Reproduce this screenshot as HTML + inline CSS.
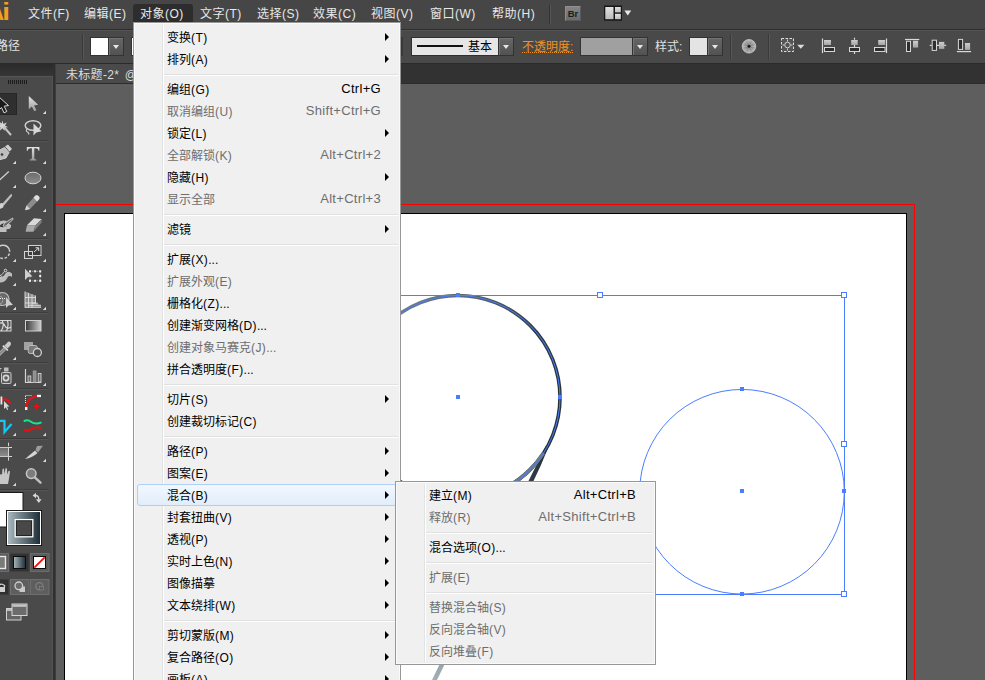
<!DOCTYPE html>
<html lang="zh-CN">
<head>
<meta charset="utf-8">
<title>Adobe Illustrator</title>
<style>
*{box-sizing:border-box;margin:0;padding:0}
html,body{width:985px;height:680px;overflow:hidden;background:#5e5e5e}
body{position:relative;font-family:"Liberation Sans","Noto Sans CJK SC",sans-serif;font-size:12px;color:#e6e6e6}
.abs{position:absolute}
#menubar{left:0;top:0;width:985px;height:29px;background:#464646}
#menubar .mi{position:absolute;top:0;height:29px;line-height:29px;white-space:nowrap;color:#e8e8e8;font-size:12px;letter-spacing:.5px;margin-left:-1px}
#mbline{left:0;top:29px;width:985px;height:1px;background:#2e2e2e}
#ctrl{left:0;top:30px;width:985px;height:33px;background:#494949;border-top:1px solid #535353}
#ctrlline{left:0;top:63px;width:985px;height:1px;background:#2a2a2a}
#tabbar{left:56px;top:64px;width:929px;height:20px;background:#323232}
#tab{left:56px;top:64px;width:120px;height:19px;background:#4a4a4a;color:#dcdcdc;line-height:23px;padding-left:10px;white-space:nowrap;font-size:12px;letter-spacing:.3px;word-spacing:2px}
#tabline{left:56px;top:83px;width:929px;height:1px;background:#2c2c2c}
#toolbox{left:0;top:64px;width:53px;height:616px;background:#4a4a4a}
#tbhead{left:0;top:64px;width:53px;height:12px;background:linear-gradient(#2b2b2b,#363636)}
#tbgap{left:53px;top:64px;width:3px;height:616px;background:#303030;border-right:1px solid #3e3e3e}
#canvas{left:56px;top:84px;width:929px;height:596px;background:#5e5e5e}
/* menu */
.menu{position:absolute;background:#f0f0f0;border:1px solid #979797;color:#000;font-size:12px;box-shadow:inset 1px 1px 0 #fafafa,inset -1px -1px 0 #fafafa}
.menu .gut{position:absolute;top:2px;bottom:2px;width:2px;border-left:1px solid #e2e3e3;border-right:1px solid #fff}
.menu .it{position:absolute;height:22px;line-height:25px;white-space:nowrap;margin-left:-1px}
.menu .dis{color:#6d6d6d}
.menu .l{font-size:12px;letter-spacing:.4px;line-height:0}
.menu .sc{position:absolute;height:22px;line-height:21px;white-space:nowrap;text-align:right;font-size:13px;letter-spacing:.3px;margin-right:-1px}
.menu .sep{position:absolute;height:2px;border-top:1px solid #e0e0e0;border-bottom:1px solid #fff}
.menu .arr{position:absolute;width:0;height:0;border-left:4px solid #000;border-top:4px solid transparent;border-bottom:4px solid transparent}
.menu .hl{position:absolute;border:1px solid #aecff7;border-radius:3px;background:linear-gradient(#f2f7fd,#e1edfb)}
.dd{background:linear-gradient(#666,#525252);border:1px solid #333;box-shadow:inset 1px 1px 0 #747474}
.dd:after{content:"";position:absolute;left:4px;top:7px;border-top:4px solid #e6e6e6;border-left:3.500px solid transparent;border-right:3.500px solid transparent}
</style>
</head>
<body>
<div id="menubar" class="abs">
<span class="mi" style="left:29px">文件(F)</span>
<span class="mi" style="left:85px">编辑(E)</span>
<div class="abs" style="left:133px;top:4px;width:60px;height:19px;background:#2d2d2d;border-radius:3px 3px 0 0"></div>
<span class="mi" style="left:141px">对象(O)</span>
<span class="mi" style="left:201px">文字(T)</span>
<span class="mi" style="left:258px">选择(S)</span>
<span class="mi" style="left:314px">效果(C)</span>
<span class="mi" style="left:372px">视图(V)</span>
<span class="mi" style="left:431px">窗口(W)</span>
<span class="mi" style="left:493px">帮助(H)</span>
</div>
<div id="mbline" class="abs"></div>
<div id="ctrl" class="abs"></div>
<div id="ctrlline" class="abs"></div>
<div id="tabbar" class="abs"></div>
<div id="tab" class="abs">未标题-2* @</div>
<div id="canvas" class="abs"></div>
<div id="tabline" class="abs"></div>
<div id="toolbox" class="abs"></div>
<div id="tbhead" class="abs"></div>
<div id="tbgap" class="abs"></div>
<div class="abs" style="left:0;top:76px;width:53px;height:1px;background:#565656"></div>
<div class="abs" style="left:52px;top:76px;width:1px;height:604px;background:#545454"></div>
<!--ARTBOARD-->
<svg class="abs" style="left:0;top:0" width="985" height="680" viewBox="0 0 985 680">
<defs>
<linearGradient id="cg" gradientUnits="userSpaceOnUse" x1="400" y1="300" x2="560" y2="400"><stop offset="0" stop-color="#73808a"/><stop offset=".3" stop-color="#56646d"/><stop offset=".7" stop-color="#2f3c45"/><stop offset="1" stop-color="#26333b"/></linearGradient>
<linearGradient id="tg" gradientUnits="userSpaceOnUse" x1="0" y1="455" x2="0" y2="680"><stop offset="0" stop-color="#26333b"/><stop offset=".25" stop-color="#3a4851"/><stop offset="1" stop-color="#a3afb7"/></linearGradient>
<clipPath id="cv"><rect x="56" y="84" width="929" height="596"/></clipPath>
</defs>
<g clip-path="url(#cv)">
<path d="M40 204.500 H914.500 V700" fill="none" stroke="#ff0000" stroke-width="1"/>
<rect x="64.500" y="213.500" width="842" height="480" fill="#fff" stroke="#000" stroke-width="1"/>
<!-- blended tail -->
<path d="M548 448 Q541 466 533.500 481 L437 680 L432 680 L528.500 481 Q538 462 546 446 Z" fill="url(#tg)"/>
<!-- big circle -->
<circle cx="458" cy="397.500" r="102" fill="none" stroke="url(#cg)" stroke-width="3.600"/>
<path d="M543.500 453 A102 102 0 0 1 490 494.300" fill="none" stroke="#6c7a84" stroke-width="3.600"/>
<circle cx="458" cy="397.500" r="102" fill="none" stroke="#4a7dff" stroke-width="1"/>
<!-- small circle -->
<circle cx="742" cy="491.750" r="102.300" fill="none" stroke="#4a7dff" stroke-width="1"/>
<!-- bounding box -->
<path d="M300 295.500 H844.500 V594.500 H300" fill="none" stroke="#4a7dff" stroke-width="1"/>
<g fill="#fff" stroke="#4a7dff" stroke-width="1">
<rect x="597.500" y="292.500" width="5" height="5"/>
<rect x="841.500" y="292.500" width="5" height="5"/>
<rect x="841.500" y="441.500" width="5" height="5"/>
<rect x="841.500" y="591.500" width="5" height="5"/>
</g>
<g fill="#4a7dff">
<rect x="456" y="395" width="4" height="4"/>
<rect x="456" y="293" width="4" height="4"/>
<rect x="558" y="395" width="4" height="4"/>
<rect x="740" y="489" width="4" height="4"/>
<rect x="740" y="387" width="4" height="4"/>
<rect x="842" y="489" width="4" height="4"/>
<rect x="740" y="592" width="4" height="4"/>
</g>
</g>
</svg>
<!--/ARTBOARD-->
<!--CTRLITEMS-->
<div class="abs" style="left:-12.500px;top:-.5px;font:bold 23px/24px 'Liberation Sans',sans-serif;color:#f4a01e">A</div><div class="abs" style="left:3.300px;top:-.5px;font:bold 23px/24px 'Liberation Sans',sans-serif;color:#f4a01e;transform:scaleX(1.2)">i</div>
<div class="abs" style="left:549px;top:5px;width:1px;height:19px;background:#333"></div>
<div class="abs" style="left:550px;top:5px;width:1px;height:19px;background:#555"></div>
<div class="abs" style="left:565px;top:6px;width:16px;height:15px;background:linear-gradient(#858585,#6c6c6c);border:1px solid #8f8f8f;border-right-color:#5a5a5a;border-bottom-color:#5a5a5a;color:#1c1c1c;font:bold 9.500px/13px 'Liberation Sans',sans-serif;text-align:center">Br</div>
<svg class="abs" style="left:603px;top:5px" width="32" height="17" viewBox="0 0 32 17">
<defs><linearGradient id="wk" x1="0" y1="0" x2="0" y2="1"><stop offset="0" stop-color="#e2e2e2"/><stop offset="1" stop-color="#bcbcbc"/></linearGradient></defs>
<rect x="1" y="0.500" width="18" height="15.200" fill="#161616"/>
<rect x="2.300" y="2" width="8.200" height="12.200" fill="url(#wk)"/>
<rect x="12" y="2" width="5.800" height="5.400" fill="url(#wk)"/>
<rect x="12" y="8.800" width="5.800" height="5.400" fill="url(#wk)"/>
<path d="M21.400 5.600 L28.200 5.600 L24.800 10.600 Z" fill="#e8e8e8"/>
</svg>
<!-- control bar -->
<div class="abs" style="left:-4px;top:36px;font-size:12px;line-height:20px;color:#e0e0e0;white-space:nowrap">路径</div>
<div class="abs" style="left:82px;top:34px;width:1px;height:25px;background:#3a3a3a"></div>
<div class="abs" style="left:83px;top:34px;width:1px;height:25px;background:#565656"></div>
<div class="abs sw" style="left:90px;top:37px;width:19px;height:19px;background:#fff;border:1px solid #333"></div>
<div class="abs dd" style="left:108px;top:37px;width:16px;height:19px"></div>
<div class="abs sw" style="left:131px;top:37px;width:19px;height:19px;background:#fff;border:1px solid #333"></div>
<div class="abs" style="left:401px;top:37px;width:2px;height:19px;background:#383838"></div>
<div class="abs" style="left:411px;top:37px;width:88px;height:19px;background:#e6e6e6;border:1px solid #2f2f2f"></div>
<div class="abs" style="left:417px;top:45px;width:46px;height:2px;background:#111"></div>
<div class="abs" style="left:468px;top:38px;line-height:18px;font-size:12px;color:#000">基本</div>
<div class="abs dd" style="left:498px;top:37px;width:16px;height:19px"></div>
<div class="abs" style="left:522px;top:36px;line-height:20px;font-size:12px;color:#f0921e;white-space:nowrap;border-bottom:1px dotted #f0921e;height:17px;line-height:22px;overflow:visible">不透明度:</div>
<div class="abs" style="left:580px;top:37px;width:53px;height:19px;background:#a0a0a0;border:1px solid #333"></div>
<div class="abs dd" style="left:632px;top:37px;width:16px;height:19px"></div>
<div class="abs" style="left:655px;top:37px;line-height:20px;font-size:12px;color:#e0e0e0;white-space:nowrap">样式:</div>
<div class="abs" style="left:689px;top:37px;width:19px;height:19px;background:#e4e4e4;border:1px solid #333"></div>
<div class="abs dd" style="left:707px;top:37px;width:16px;height:19px"></div>
<div class="abs" style="left:730px;top:34px;width:1px;height:25px;background:#3a3a3a"></div>
<div class="abs" style="left:731px;top:34px;width:1px;height:25px;background:#565656"></div>
<svg class="abs" style="left:740px;top:37px" width="18" height="18" viewBox="0 0 18 18">
<defs><radialGradient id="gl" cx=".5" cy=".5" r=".5"><stop offset="0" stop-color="#222"/><stop offset=".25" stop-color="#777"/><stop offset="1" stop-color="#b8b8b8"/></radialGradient></defs>
<circle cx="9" cy="9.300" r="6.800" fill="url(#gl)" stroke="#c4c4c4" stroke-width=".8"/>
<path d="M9 2.500V16.100M2.200 9.300H15.800M4.200 4.500L13.800 14.100M13.800 4.500L4.200 14.100" stroke="#dcdcdc" stroke-opacity=".55" stroke-width=".7"/>
<circle cx="9" cy="9.300" r="1.500" fill="#1a1a1a"/>
</svg>
<div class="abs" style="left:768px;top:34px;width:1px;height:25px;background:#3a3a3a"></div>
<div class="abs" style="left:769px;top:34px;width:1px;height:25px;background:#565656"></div>
<svg class="abs" style="left:779px;top:36px" width="30" height="20" viewBox="0 0 30 20">
<rect x="2.500" y="2.500" width="12" height="13" fill="#555" stroke="#e0e0e0" stroke-width="1" stroke-dasharray="2.500 1.500"/>
<circle cx="8.500" cy="9" r="2.800" fill="none" stroke="#d0d0d0" stroke-width="1"/><path d="M8.500 3.500v2M8.500 12.500v2M3.500 9h1.500M12 9h1.500" stroke="#d0d0d0" stroke-width="1"/>
<path d="M18.200 8.800 L25.400 8.800 L21.800 12.800 Z" fill="#dcdcdc"/>
</svg>
<svg class="abs" style="left:815px;top:34px" width="170" height="24" viewBox="815 34 170 24">
<defs><linearGradient id="ab" x1="0" y1="0" x2="0" y2="1"><stop offset="0" stop-color="#cdcdcd"/><stop offset="1" stop-color="#a4a4a4"/></linearGradient></defs>
<g fill="#2e2e2e" stroke="#d6d6d6" stroke-width="1">
<rect x="824.500" y="47.500" width="10" height="4"/>
<rect x="849.500" y="47.500" width="10" height="4"/>
<rect x="874.500" y="47.500" width="10.500" height="4"/>
<rect x="906.500" y="41.300" width="4" height="10.200"/>
<rect x="932.200" y="40.200" width="4.300" height="10.200"/>
<rect x="958.400" y="39.400" width="4.200" height="10"/>
</g>
<g fill="url(#ab)">
<rect x="824" y="40" width="7" height="5"/>
<rect x="851.200" y="40" width="6.500" height="5"/>
<rect x="878.200" y="40" width="7" height="5"/>
<rect x="913" y="40.800" width="5.100" height="6.800"/>
<rect x="939" y="41.900" width="5.300" height="7"/>
<rect x="965" y="43" width="5.100" height="6.900"/>
</g>
<g stroke="#dadada" stroke-width="1.200" fill="none">
<path d="M822.500 38.500V53.100"/>
<path d="M854.500 37.700V39.800M854.500 45V47M854.500 52V53.900"/>
<path d="M886.500 38.500V53.100"/>
<path d="M905 39.500H919.300"/>
<path d="M929.800 45.300H931.700M937 45.300H939M944.300 45.300H946.100"/>
<path d="M956.900 51.600H971.100"/>
</g>
</svg>
<!--/CTRLITEMS-->
<!--TOOLS-->
<svg class="abs" style="left:0;top:64px" width="53" height="616" viewBox="0 64 53 616">
<defs>
<linearGradient id="lg" x1="0" y1="0" x2="0" y2="1"><stop offset="0" stop-color="#e4e4e4"/><stop offset="1" stop-color="#9a9a9a"/></linearGradient>
<linearGradient id="gr" x1="0" y1="0" x2="1" y2="0"><stop offset="0" stop-color="#383838"/><stop offset="1" stop-color="#cfcfcf"/></linearGradient>
<linearGradient id="st" x1="0" y1="0" x2="1" y2="0"><stop offset="0" stop-color="#a9b7be"/><stop offset="1" stop-color="#1d2e37"/></linearGradient>
<linearGradient id="eg" x1="0" y1="0" x2="0" y2="1"><stop offset="0" stop-color="#6a6a6a"/><stop offset="1" stop-color="#8e8e8e"/></linearGradient>
</defs>
<g fill="#1c1c1c"><rect x="8" y="80" width="1" height="4"/><rect x="10" y="80" width="1" height="4"/><rect x="12" y="80" width="1" height="4"/><rect x="14" y="80" width="1" height="4"/><rect x="16" y="80" width="1" height="4"/><rect x="18" y="80" width="1" height="4"/><rect x="20" y="80" width="1" height="4"/><rect x="22" y="80" width="1" height="4"/><rect x="24" y="80" width="1" height="4"/><rect x="26" y="80" width="1" height="4"/></g>
<rect x="0" y="140" width="48" height="1" fill="#3c3c3c"/><rect x="0" y="141" width="48" height="1" fill="#565656"/><rect x="0" y="238" width="48" height="1" fill="#3c3c3c"/><rect x="0" y="239" width="48" height="1" fill="#565656"/><rect x="0" y="312" width="48" height="1" fill="#3c3c3c"/><rect x="0" y="313" width="48" height="1" fill="#565656"/><rect x="0" y="362" width="48" height="1" fill="#3c3c3c"/><rect x="0" y="363" width="48" height="1" fill="#565656"/><rect x="0" y="388" width="48" height="1" fill="#3c3c3c"/><rect x="0" y="389" width="48" height="1" fill="#565656"/><rect x="0" y="438" width="48" height="1" fill="#3c3c3c"/><rect x="0" y="439" width="48" height="1" fill="#565656"/><rect x="0" y="489" width="48" height="1" fill="#3c3c3c"/><rect x="0" y="490" width="48" height="1" fill="#565656"/>
<!-- selected tool bg -->
<rect x="-1" y="93.500" width="17.500" height="21" fill="#2f2f2f" stroke="#262626"/>
<!-- selection arrow (black) -->
<path d="M-1.500 96.500 L8.500 105.500 L4.200 106.200 L6.800 111.500 L4 112.800 L1.500 107.500 L-1.500 110.500 Z" fill="#1a1a1a" stroke="#d8d8d8" stroke-width="1"/>
<!-- direct selection -->
<path d="M28.800 96 L28.800 109.200 L31.800 106.600 L34.300 111.300 L36.500 110.200 L34 105.500 L38.200 104.800 Z" fill="url(#lg)"/>
<!-- magic wand -->
<path d="M2.500 120.500 L3.400 124 L6.800 122.500 L5 125.500 L8 127.300 L4.600 127.600 L4.500 131 L2.500 128.300 L0 130.500 L0.400 127 L-3 126 L0.300 124.500 L-1 121.500 L1.700 123.500 Z" fill="#d6d6d6"/>
<path d="M4 127 L10.500 134.500" stroke="#c4c4c4" stroke-width="2" stroke-linecap="round"/>
<!-- lasso -->
<ellipse cx="33" cy="125.500" rx="7.800" ry="4.800" fill="none" stroke="#cfcfcf" stroke-width="1.500"/>
<path d="M27 129 q-1.500 2 .5 3 q2 1 1 2.500" fill="none" stroke="#cfcfcf" stroke-width="1.200"/>
<path d="M33.500 123.500 L33.500 135.500 L36.300 132.500 L41.500 131.200 Z" fill="#d8d8d8"/>
<!-- pen -->
<path d="M5 146.500 L8 144.500 L12 149 L9.500 151.500 Z" fill="#cfcfcf"/>
<path d="M4.500 147.500 L9 152.500 L6 158 L-3 160.500 L-4 152 Z" fill="#bdbdbd" stroke="#e0e0e0" stroke-width=".8"/>
<circle cx="2" cy="154.500" r="1.300" fill="#3a3a3a"/>
<!-- T -->
<path d="M26.800 147 H39.400 V150.800 H38.500 Q38.300 148.300 36 148.200 H34.300 V158 Q34.300 159.500 36.500 159.600 V160.400 H29.700 V159.600 Q31.900 159.500 31.900 158 V148.200 H30.200 Q27.900 148.300 27.700 150.800 H26.800 Z" fill="url(#lg)"/>
<!-- line -->
<path d="M-1 180.500 L8.800 171.500" stroke="#d0d0d0" stroke-width="1.300"/>
<!-- ellipse -->
<ellipse cx="33" cy="178" rx="8" ry="5.800" fill="url(#eg)" stroke="#d4d4d4" stroke-width="1"/>
<!-- brush -->
<path d="M11 194 Q12.500 194 12 196 L4 205.500 L2 204 Z" fill="#bdbdbd"/>
<path d="M3.500 204 Q4.500 207.500 1 208.500 Q-2 209.500 -3 207 Q-1 203 2 203 Z" fill="#d2d2d2"/>
<!-- pencil -->
<path d="M35.500 195.500 Q37.500 194.500 39 196.500 Q40.300 198 39 199.500 L30 209 L25 210.200 L26.500 205.500 Z" fill="#8c8c8c"/>
<path d="M35.500 195.500 Q37.500 194.500 39 196.500 Q40.300 198 39 199.500 L37 201.500 L33.500 197.600 Z" fill="#dedede"/>
<path d="M26.500 205.500 L30 209 L25 210.200 Z" fill="#d8d8d8"/>
<!-- blob brush -->
<path d="M-3 223 Q2 219.500 7 221 L4 224 Q9 222.500 11 225 Q11.500 228 9 229 L6.500 229.300 V232 H-3 Z" fill="#bfbfbf"/>
<path d="M-1 226.500 Q2 222.500 6.500 223.500 Q8 225 6 226.500 Q3 228 -1 226.500 Z" fill="#383838"/>
<path d="M12.600 218 Q13.500 219 12.500 220 L6.500 225.500 Q4.500 227 3 226 Q4 223.500 5.500 222.500 Z" fill="#6a6a6a" stroke="#dcdcdc" stroke-width=".8"/>
<!-- eraser -->
<path d="M27 225.300 L34 218.200 L41.800 219 L35.300 225.600 Z" fill="#d9d9d9"/>
<path d="M25.600 231.800 L27 225.300 L35.300 225.600 L33.500 231.800 Z" fill="#a9a9a9"/>
<path d="M35.300 225.600 L41.800 219 L41.600 222.500 L33.500 231.800 Z" fill="#7e7e7e"/>
<!-- rotate -->
<path d="M-3.390 249.670 A6.800 6.800 0 0 1 9.200 249.200" fill="none" stroke="#cdcdcd" stroke-width="1.500"/><path d="M9.200 249.200 A6.800 6.800 0 0 1 -3.390 254.330" fill="none" stroke="#cdcdcd" stroke-width="1.500" stroke-dasharray="2.600 1.700"/>
<!-- scale -->
<rect x="28.500" y="245.500" width="12.500" height="10" fill="#3c3c3c" stroke="#d2d2d2"/>
<rect x="24.500" y="251.500" width="8" height="7" fill="none" stroke="#d2d2d2"/>
<path d="M34 252 L38.500 248 M35.500 247.800 H38.700 V251" fill="none" stroke="#e0e0e0" stroke-width="1"/>
<!-- warp -->
<path d="M-2 277 Q3 278 5 274 Q8 270 12 273.500 L12 277 Q8.500 274.500 7 278.500 Q4 284 -3 282 Z" fill="#bcbcbc"/>
<circle cx="5.500" cy="270.500" r="1.300" fill="none" stroke="#e0e0e0" stroke-width=".9"/>
<circle cx="0" cy="276.500" r="1.300" fill="#4a4a4a" stroke="#e0e0e0" stroke-width=".9"/>
<path d="M1 275.500 L4.500 271.500" stroke="#e0e0e0" stroke-width=".8"/>
<!-- free transform -->
<rect x="30" y="271.300" width="10.200" height="9.500" fill="none" stroke="#bdbdbd" stroke-width=".8" stroke-dasharray="1.200 1"/><g fill="#efefef"><rect x="29" y="270.300" width="2" height="2"/><rect x="34.100" y="270.300" width="2" height="2"/><rect x="39.200" y="270.300" width="2" height="2"/><rect x="39.200" y="275" width="2" height="2"/><rect x="39.200" y="279.800" width="2" height="2"/><rect x="34.100" y="279.800" width="2" height="2"/><rect x="29" y="279.800" width="2" height="2"/></g>
<path d="M25 268.800 L25 280 L28 277 L32.500 276.500 Z" fill="#cfcfcf"/>
<!-- shape builder -->
<circle cx="2.500" cy="299" r="6.500" fill="#6a6a6a" stroke="#bdbdbd" stroke-width="1.200"/>
<circle cx="-1" cy="300" r="4" fill="none" stroke="#9a9a9a" stroke-width="1"/>
<path d="M-2 298.500 H5" stroke="#f0f0f0" stroke-width="1" stroke-dasharray="1 1"/>
<path d="M6 297 L6 308 L8.500 305.500 L13 305 Z" fill="#cdcdcd"/>
<!-- perspective grid -->
<path d="M25 291.500 L35.500 295.500 L35.500 303 L41 305.500 L41 307.800 L25 307.800 Z" fill="#8e8e8e"/>
<path d="M25 291.500 V307.800 M28.500 292.800 V307.800 M32 294.200 V307.800 M35.500 295.500 V303 M25 297.500 H35.500 M25 303 H35.500 M25 307.300 H41.200 M29 305.300 H41 M32 303.200 H38" fill="none" stroke="#dedede" stroke-width=".9"/>
<!-- mesh -->
<rect x="-2" y="320.500" width="13" height="10.500" fill="#5a5a5a" stroke="#d4d4d4"/>
<path d="M-2 324 Q3 321 5 326 Q7 330 11 327 M2 320.500 Q5 325 1 331 M7.500 320.500 Q9 326 6.500 331" fill="none" stroke="#e4e4e4" stroke-width="1.100"/>
<!-- gradient -->
<rect x="25.500" y="320.500" width="15.500" height="10.500" fill="url(#gr)" stroke="#cfcfcf"/>
<!-- eyedropper -->
<path d="M8 341.800 Q10.500 341 11 343.500 Q11.200 345 9.500 346.500 L7.500 348.500 L4.500 345.500 L6.500 343.500 Z" fill="#c9c9c9"/>
<path d="M3.500 345 L8.500 350 L7.300 351 L2.300 346.200 Z" fill="#e2e2e2"/>
<path d="M4 347.500 L6 349.500 L-1.500 357 L-3.500 357.500 L-3 355 Z" fill="#8a8a8a" stroke="#d0d0d0" stroke-width=".7"/>
<!-- blend -->
<rect x="24" y="342" width="9" height="8" fill="#a2a2a2"/>
<rect x="28.200" y="345.500" width="9" height="8" rx="2" fill="#7a7a7a" stroke="#bdbdbd" stroke-width="1"/>
<circle cx="37.400" cy="352.500" r="4" fill="#505050" stroke="#d0d0d0" stroke-width="1.300"/>
<!-- symbol sprayer -->
<rect x="1.500" y="372.500" width="9.500" height="11" rx="1" fill="#5c5c5c" stroke="#c9c9c9"/>
<rect x="4" y="367.500" width="4.500" height="4" fill="#bdbdbd"/>
<circle cx="6" cy="378" r="2.600" fill="none" stroke="#d8d8d8" stroke-width="1.600"/>
<path d="M0 368.500 h1.500 M-1 370 h1.500" stroke="#d0d0d0" stroke-width=".9"/>
<!-- graph -->
<path d="M25.500 369 V382.500 H41.200" fill="none" stroke="#d4d4d4" stroke-width="1.200"/>
<rect x="28" y="376" width="2.800" height="6" fill="#6e6e6e" stroke="#d4d4d4" stroke-width=".9"/>
<rect x="33.200" y="371" width="2.800" height="11" fill="#8e8e8e" stroke="#9e9e9e" stroke-width=".9"/>
<rect x="38.200" y="373.500" width="2.800" height="8.500" fill="#6e6e6e" stroke="#d4d4d4" stroke-width=".9"/>
<!-- artboard-ish red tool left -->
<path d="M1.500 400 Q7 397.500 10.500 404" fill="none" stroke="#f01010" stroke-width="2"/>
<rect x="0.500" y="396.500" width="1.800" height="8" fill="#e8e8e8"/>
<path d="M4 401 L4 409 L5.800 407.200 L7.200 410 L8.200 409.500 L7 406.800 L9.300 406.500 Z" fill="#d8d8d8"/>
<!-- slice-ish red tool right -->
<path d="M25.500 395.500 H32 M25.500 396 V403" fill="none" stroke="#e8e8e8" stroke-width="1" stroke-dasharray="1 1"/>
<path d="M26.200 408 Q26.500 397.500 37.500 396" fill="none" stroke="#f01010" stroke-width="2"/>
<rect x="25" y="407" width="2.400" height="3" fill="#f4f4f4"/>
<rect x="37" y="394.800" width="4" height="2.300" fill="#f4f4f4"/>
<path d="M34 406.500 H39 M36.500 404 V409" stroke="#f01010" stroke-width="1"/>
<!-- cyan Z -->
<path d="M-2 420.800 H4.500 V432 L11.500 424" fill="none" stroke="#18c8f4" stroke-width="2.200"/>
<!-- waves -->
<path d="M23.800 421.500 Q27 419 31 421.800 Q35.500 425 41.500 422.300" fill="none" stroke="#10e894" stroke-width="2"/>
<path d="M23.800 429.500 Q27.500 432 31.500 429 Q35.500 426 41.500 428" fill="none" stroke="#f00c0c" stroke-width="2"/>
<!-- artboard tool -->
<rect x="-2" y="447.500" width="10.500" height="9" fill="url(#eg)" stroke="#c9c9c9"/>
<path d="M8.500 442.700 V461 M8.500 447.500 H13 M8.500 456.500 H13" stroke="#d6d6d6" stroke-width="1" stroke-dasharray="3.500 1.300"/>
<!-- knife -->
<path d="M25 459 L35 450.500 L37.500 453 Q32 458 25 459 Z" fill="#d4d4d4"/>
<path d="M35.500 450 L37 446 L43 445.700 L38 452.500 Z" fill="#9c9c9c"/>
<!-- hand -->
<path d="M-2 474 L2 474.500 L2.500 469 Q3.300 468 4 469 L4.500 474 L5.500 468.500 Q6.300 467.600 7 468.700 L7.200 474.500 L8.500 471 Q9.500 470.300 10 471.500 L9 478.500 L8 484 L-3 484 Z" fill="#c6c6c6"/>
<!-- zoom -->
<circle cx="31.200" cy="473.600" r="4.800" fill="#7c7c7c" stroke="#c6c6c6" stroke-width="1.500"/>
<path d="M34.800 477.300 L40.500 482.700" stroke="#c0c0c0" stroke-width="2.400" stroke-linecap="round"/>
<!-- corner triangles -->
<g fill="#dadada"><path d="M46 110.8V114H42.8Z"/><path d="M16 160.8V164H12.8Z"/><path d="M46 160.8V164H42.8Z"/><path d="M16 184.8V188H12.8Z"/><path d="M46 184.8V188H42.8Z"/><path d="M46 208.8V212H42.8Z"/><path d="M46 232.8V236H42.8Z"/><path d="M16 258.8V262H12.8Z"/><path d="M46 258.8V262H42.8Z"/><path d="M16 282.8V286H12.8Z"/><path d="M16 306.8V310H12.8Z"/><path d="M46 306.8V310H42.8Z"/><path d="M16 356.8V360H12.8Z"/><path d="M16 382.8V386H12.8Z"/><path d="M46 382.8V386H42.8Z"/><path d="M16 408.8V412H12.8Z"/><path d="M46 408.8V412H42.8Z"/><path d="M16 432.8V436H12.8Z"/><path d="M46 432.8V436H42.8Z"/><path d="M46 458.8V462H42.8Z"/><path d="M16 482.8V486H12.8Z"/></g>
<!-- fill / stroke -->
<rect x="-3" y="492.500" width="26" height="34.500" fill="#fff" stroke="#1a1a1a"/>
<path d="M35.500 495.500 Q38.800 495.500 38.800 499.500" fill="none" stroke="#d6d6d6" stroke-width="1.400"/><path d="M32.600 495.500 L36 492.800 V498.200 Z M38.800 503 L36 499.300 H41.600 Z" fill="#d6d6d6"/>
<rect x="6.500" y="510.500" width="35" height="35" fill="#fff" stroke="#1c1c1c"/>
<rect x="8" y="512" width="32" height="32" fill="url(#st)"/>
<rect x="15.200" y="519.600" width="17.600" height="17.200" fill="#1c1c1c" stroke="#fff" stroke-width="1.300"/>
<rect x="16.800" y="521.200" width="14.400" height="14" fill="#484848"/>
<!-- color/gradient/none -->
<rect x="-3" y="553.500" width="11.500" height="18" fill="#5c5c5c" stroke="#6c6c6c"/>
<rect x="-3" y="556.500" width="8.500" height="12" fill="#7a7a7a" stroke="#e8e8e8" stroke-width="1.400"/>
<rect x="10" y="553.500" width="19" height="18" fill="#323232" stroke="#404040"/>
<rect x="13.500" y="556.500" width="12" height="12" fill="url(#st)" stroke="#0c0c0c"/>
<rect x="30.500" y="553.500" width="18.500" height="18" fill="#5c5c5c" stroke="#6c6c6c"/>
<rect x="33.500" y="556.500" width="12" height="12" fill="#fff" stroke="#0c0c0c"/>
<path d="M34.300 567.700 L44.700 557.300" stroke="#f40808" stroke-width="1.800"/>
<!-- draw modes -->
<rect x="-3" y="579.500" width="11.500" height="15" fill="#303030" stroke="#3c3c3c"/>
<path d="M-2 586 Q1 582.500 4.500 585.500 V587" fill="none" stroke="#cfcfcf" stroke-width="1.300"/>
<rect x="-3" y="587" width="8" height="5" fill="#cfcfcf"/>
<rect x="10.500" y="579.500" width="18.500" height="15" fill="#5e5e5e" stroke="#6e6e6e"/>
<rect x="19.500" y="586.500" width="5.500" height="5.500" fill="#c9c9c9"/>
<circle cx="18.800" cy="585.800" r="3.800" fill="#6a6a6a" stroke="#d0d0d0" stroke-width="1.300"/>
<rect x="30.500" y="579.500" width="18.500" height="15" fill="#5e5e5e" stroke="#6e6e6e"/>
<circle cx="39.400" cy="586.200" r="3.600" fill="none" stroke="#7e7e7e" stroke-width="1.300"/>
<rect x="39.500" y="586.500" width="4" height="3.500" fill="#5e5e5e" stroke="#7e7e7e" stroke-width=".8"/>
<!-- screen mode -->
<rect x="6.500" y="608.500" width="14.500" height="11.500" fill="#646464" stroke="#d0d0d0"/>
<rect x="7" y="609" width="13.500" height="2" fill="#bdbdbd"/>
<rect x="12" y="604" width="15" height="11.500" fill="#6c6c6c" stroke="#d6d6d6"/>
<rect x="12.500" y="604.500" width="14" height="2.300" fill="#c6c6c6"/>
</svg>
<!--/TOOLS-->
<!--MENU-->
<div class="menu" style="left:133px;top:22px;width:268px;height:670px">
<div class="gut" style="left:28px"></div>
<div class="it" style="left:34px;top:3px">变换<span class="l">(T)</span></div>
<div class="arr" style="left:251px;top:10px"></div>
<div class="it" style="left:34px;top:25px">排列<span class="l">(A)</span></div>
<div class="arr" style="left:251px;top:32px"></div>
<div class="sep" style="left:30px;top:51px;width:234px"></div>
<div class="it" style="left:34px;top:55px">编组<span class="l">(G)</span></div>
<div class="sc" style="right:20px;top:55px">Ctrl+G</div>
<div class="it dis" style="left:34px;top:77px">取消编组<span class="l">(U)</span></div>
<div class="sc dis" style="right:20px;top:77px">Shift+Ctrl+G</div>
<div class="it" style="left:34px;top:99px">锁定<span class="l">(L)</span></div>
<div class="arr" style="left:251px;top:106px"></div>
<div class="it dis" style="left:34px;top:121px">全部解锁<span class="l">(K)</span></div>
<div class="sc dis" style="right:20px;top:121px">Alt+Ctrl+2</div>
<div class="it" style="left:34px;top:143px">隐藏<span class="l">(H)</span></div>
<div class="arr" style="left:251px;top:150px"></div>
<div class="it dis" style="left:34px;top:165px">显示全部</div>
<div class="sc dis" style="right:20px;top:165px">Alt+Ctrl+3</div>
<div class="sep" style="left:30px;top:191px;width:234px"></div>
<div class="it" style="left:34px;top:195px">滤镜</div>
<div class="arr" style="left:251px;top:202px"></div>
<div class="sep" style="left:30px;top:221px;width:234px"></div>
<div class="it" style="left:34px;top:225px">扩展<span class="l">(X)</span>...</div>
<div class="it dis" style="left:34px;top:247px">扩展外观<span class="l">(E)</span></div>
<div class="it" style="left:34px;top:269px">栅格化<span class="l">(Z)</span>...</div>
<div class="it" style="left:34px;top:291px">创建渐变网格<span class="l">(D)</span>...</div>
<div class="it dis" style="left:34px;top:313px">创建对象马赛克<span class="l">(J)</span>...</div>
<div class="it" style="left:34px;top:335px">拼合透明度<span class="l">(F)</span>...</div>
<div class="sep" style="left:30px;top:361px;width:234px"></div>
<div class="it" style="left:34px;top:365px">切片<span class="l">(S)</span></div>
<div class="arr" style="left:251px;top:372px"></div>
<div class="it" style="left:34px;top:387px">创建裁切标记<span class="l">(C)</span></div>
<div class="sep" style="left:30px;top:413px;width:234px"></div>
<div class="it" style="left:34px;top:417px">路径<span class="l">(P)</span></div>
<div class="arr" style="left:251px;top:424px"></div>
<div class="it" style="left:34px;top:439px">图案<span class="l">(E)</span></div>
<div class="arr" style="left:251px;top:446px"></div>
<div class="hl" style="left:3px;top:461px;width:260px;height:22px"></div>
<div class="it" style="left:34px;top:461px">混合<span class="l">(B)</span></div>
<div class="arr" style="left:251px;top:468px"></div>
<div class="it" style="left:34px;top:483px">封套扭曲<span class="l">(V)</span></div>
<div class="arr" style="left:251px;top:490px"></div>
<div class="it" style="left:34px;top:505px">透视<span class="l">(P)</span></div>
<div class="arr" style="left:251px;top:512px"></div>
<div class="it" style="left:34px;top:527px">实时上色<span class="l">(N)</span></div>
<div class="arr" style="left:251px;top:534px"></div>
<div class="it" style="left:34px;top:549px">图像描摹</div>
<div class="arr" style="left:251px;top:556px"></div>
<div class="it" style="left:34px;top:571px">文本绕排<span class="l">(W)</span></div>
<div class="arr" style="left:251px;top:578px"></div>
<div class="sep" style="left:30px;top:597px;width:234px"></div>
<div class="it" style="left:34px;top:601px">剪切蒙版<span class="l">(M)</span></div>
<div class="arr" style="left:251px;top:608px"></div>
<div class="it" style="left:34px;top:623px">复合路径<span class="l">(O)</span></div>
<div class="arr" style="left:251px;top:630px"></div>
<div class="it" style="left:34px;top:645px">画板<span class="l">(A)</span></div>
<div class="arr" style="left:251px;top:652px"></div>
</div>
<div class="menu" style="left:395px;top:481px;width:261px;height:184px">
<div class="gut" style="left:28px"></div>
<div class="it" style="left:34px;top:2px">建立<span class="l">(M)</span></div>
<div class="sc" style="right:20px;top:2px">Alt+Ctrl+B</div>
<div class="it dis" style="left:34px;top:24px">释放<span class="l">(R)</span></div>
<div class="sc dis" style="right:20px;top:24px">Alt+Shift+Ctrl+B</div>
<div class="sep" style="left:30px;top:50px;width:227px"></div>
<div class="it" style="left:34px;top:54px">混合选项<span class="l">(O)</span>...</div>
<div class="sep" style="left:30px;top:80px;width:227px"></div>
<div class="it dis" style="left:34px;top:84px">扩展<span class="l">(E)</span></div>
<div class="sep" style="left:30px;top:110px;width:227px"></div>
<div class="it dis" style="left:34px;top:114px">替换混合轴<span class="l">(S)</span></div>
<div class="it dis" style="left:34px;top:136px">反向混合轴<span class="l">(V)</span></div>
<div class="it dis" style="left:34px;top:158px">反向堆叠<span class="l">(F)</span></div>
</div>
<!--/MENU-->
</body>
</html>
